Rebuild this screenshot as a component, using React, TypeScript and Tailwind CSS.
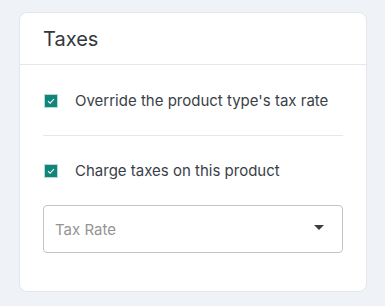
import { useState } from 'react';

function Check({ checked, onChange }: { checked: boolean; onChange: () => void }) {
  return (
    <button
      type="button"
      onClick={onChange}
      className="flex h-[14px] w-[14px] items-center justify-center border border-[#b8dcd8] bg-[#12857a]"
    >
      {checked && (
        <svg width="10" height="10" viewBox="0 0 10 10" fill="none">
          <path d="M2 5.2 L4.1 7.2 L8 3" stroke="white" strokeWidth="1.1" />
        </svg>
      )}
    </button>
  );
}

export default function App() {
  const [override, setOverride] = useState(true);
  const [charge, setCharge] = useState(true);

  return (
    <div className="h-[306px] w-[385px] bg-[#eff3f7] pl-[19px] pt-[12px] font-['Inter',sans-serif]">
      <section className="h-[280px] w-[348px] rounded-lg border border-[#e4e8ec] bg-white">
        <header className="flex h-[52px] items-center border-b border-[#e5e7ea] px-[23px] pt-[1px]">
          <h2 className="text-[20px] font-normal text-[#333840]">Taxes</h2>
        </header>
        <div className="px-[23px]">
          <label className="flex h-[70px] items-center gap-[17px] pl-[1px] pt-[2px]">
            <Check checked={override} onChange={() => setOverride((v) => !v)} />
            <span className="text-[15px] text-[#3a3f47]">Override the product type's tax rate</span>
          </label>
          <div className="border-t border-[#e6e8eb]" />
          <label className="flex h-[69px] items-center gap-[17px] pl-[1px] pt-[1px]">
            <Check checked={charge} onChange={() => setCharge((v) => !v)} />
            <span className="text-[15px] text-[#3a3f47]">Charge taxes on this product</span>
          </label>
          <div className="flex h-[48px] items-center justify-between rounded border border-[#c4c4c4] pl-[11px] pr-[18px]">
            <span className="pt-[3px] text-[15px] text-[#949494]">Tax Rate</span>
            <svg width="10" height="5" viewBox="0 0 10 5" className="-mt-[4px]">
              <path d="M0 0 L10 0 L5 5 Z" fill="#3d3d3d" />
            </svg>
          </div>
        </div>
      </section>
    </div>
  );
}
